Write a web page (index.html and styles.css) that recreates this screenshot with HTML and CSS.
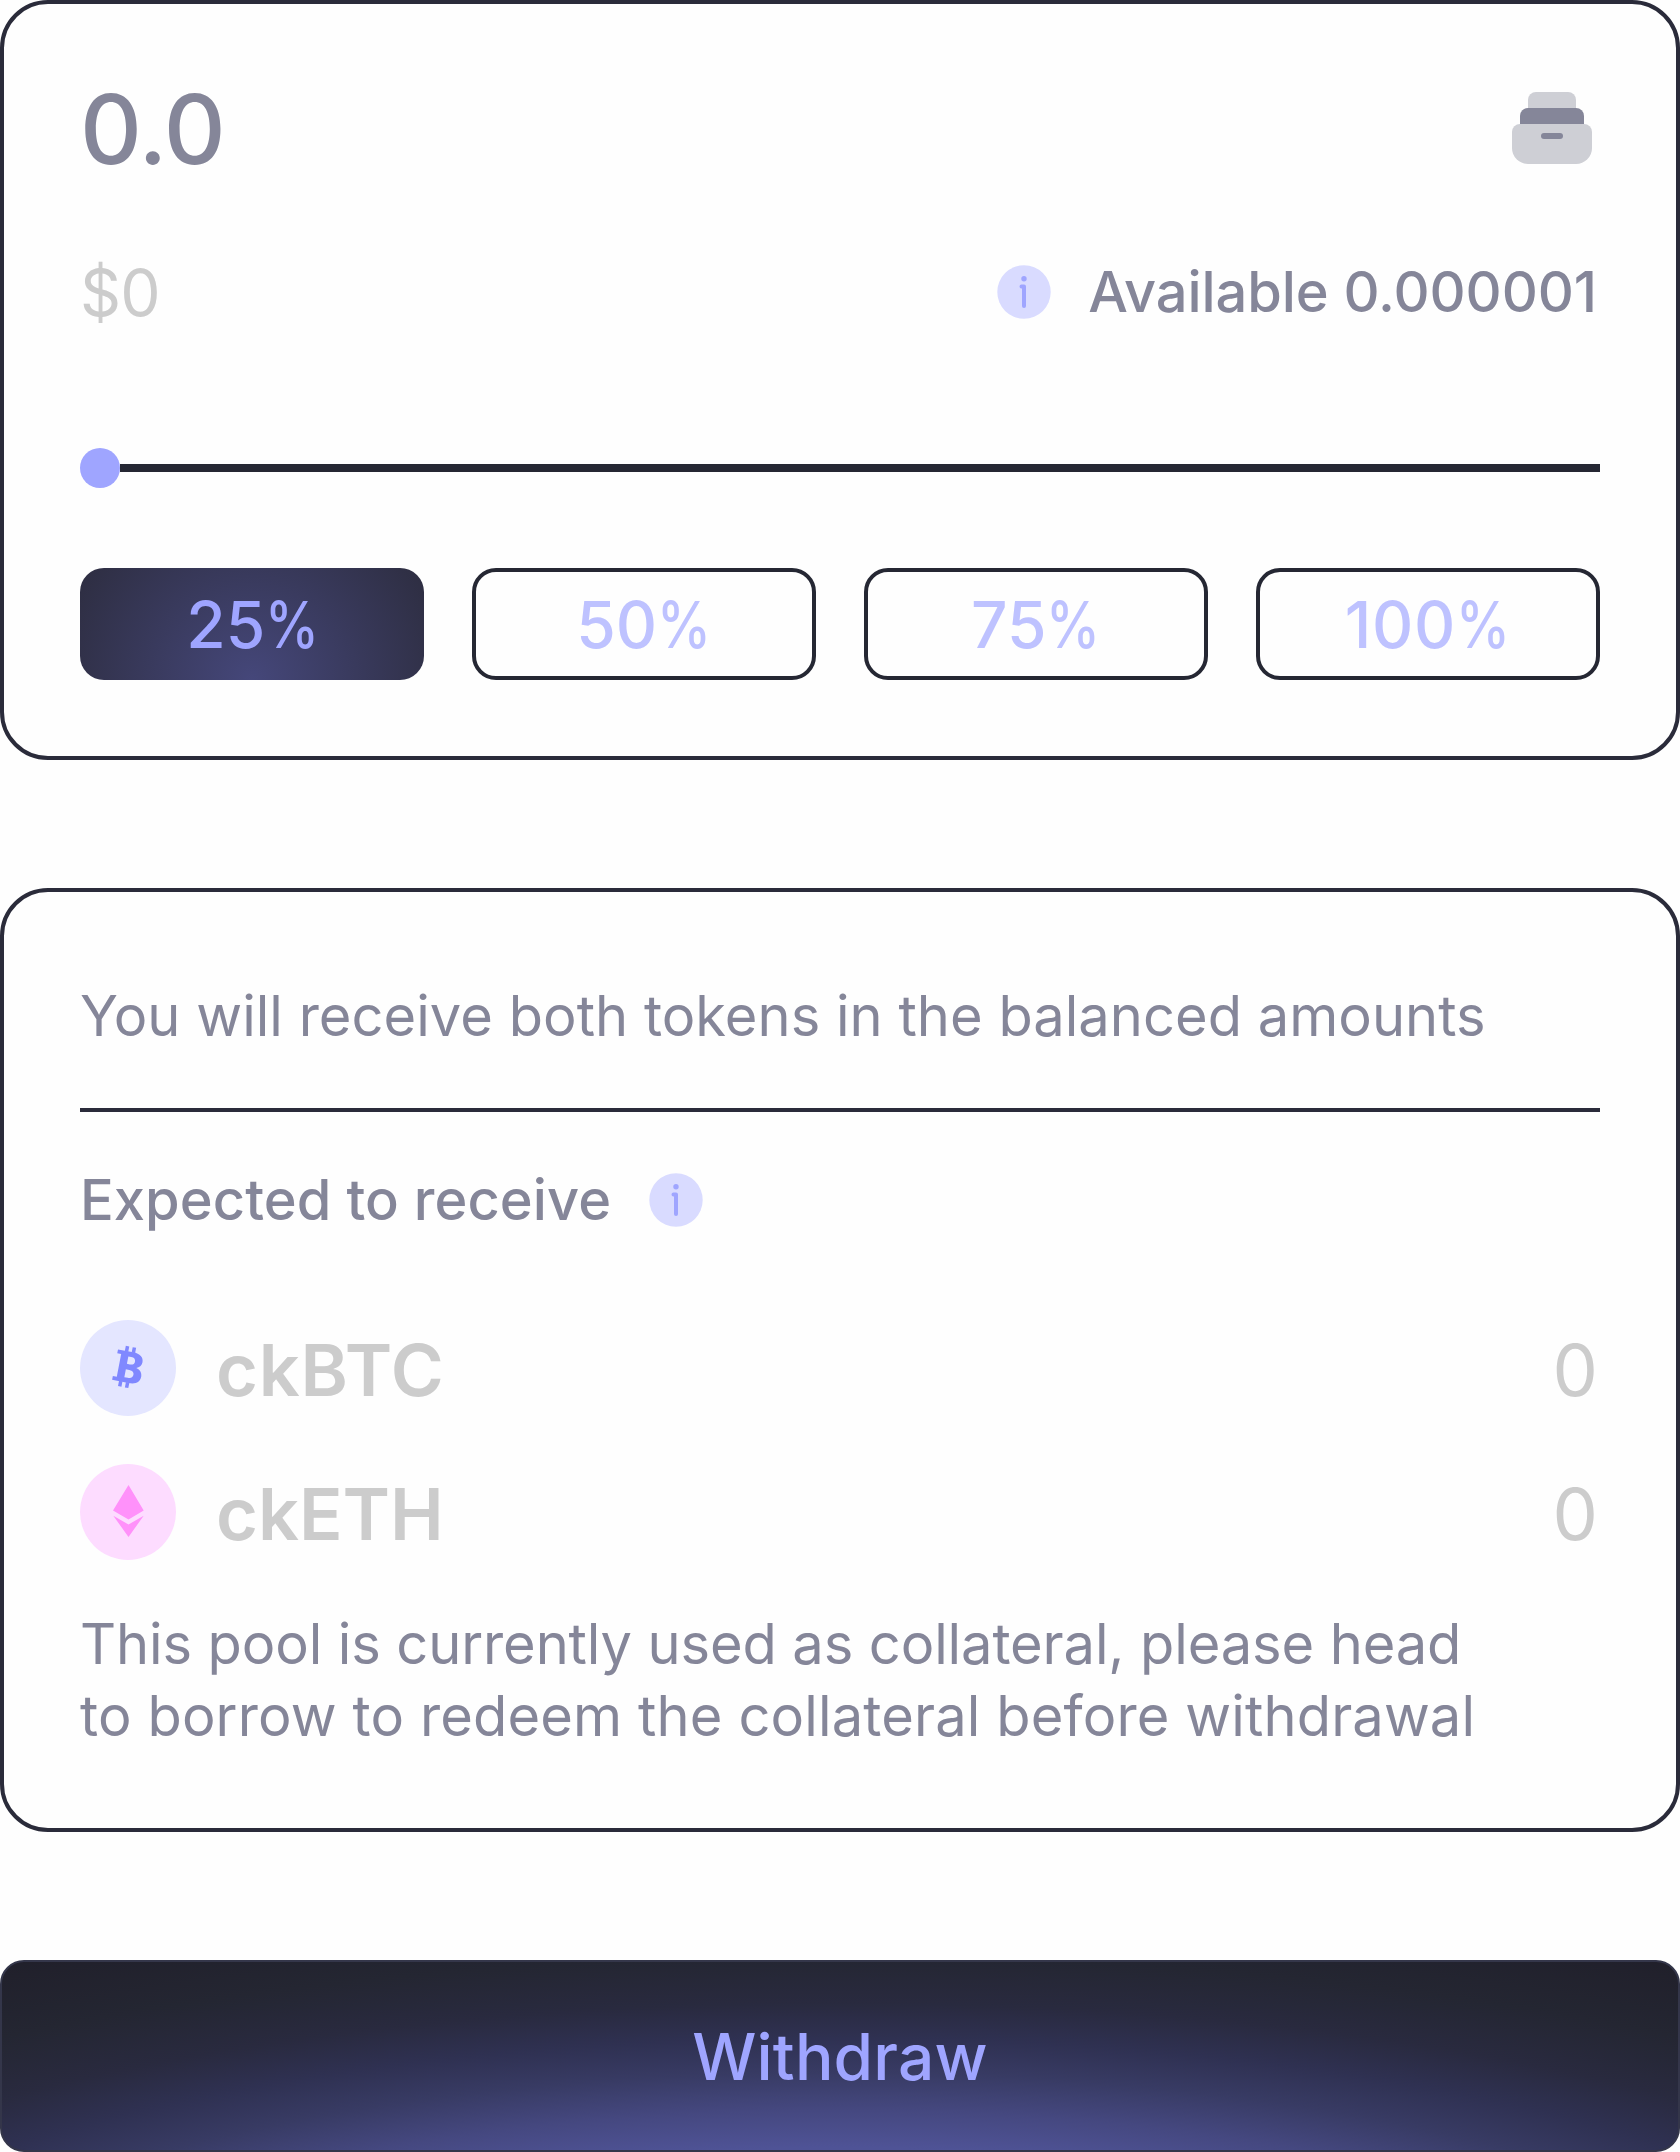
FILE: index.html
```html
<!DOCTYPE html>
<html lang="en">
<head>
<meta charset="utf-8">
<title>Withdraw</title>
<link rel="stylesheet" href="styles.css">
</head>
<body>
<main class="panel">
  <section class="card amount-card">
    <div class="amount-row">
      <span class="amount">0.0</span>
      <svg class="wallet" viewBox="0 0 96 96">
        <path fill="#cecfd5" d="M24 28V20A8 8 0 0 1 32 12H64A8 8 0 0 1 72 20V28Z"/>
        <path fill="#858699" d="M16 44V36A8 8 0 0 1 24 28H72A8 8 0 0 1 80 36V44Z"/>
        <path fill="#cecfd5" d="M16 44H80A8 8 0 0 1 88 52V68A16 16 0 0 1 72 84H24A16 16 0 0 1 8 68V52A8 8 0 0 1 16 44Z"/>
        <rect fill="#858699" x="37" y="53" width="22" height="6" rx="3"/>
      </svg>
    </div>
    <div class="available-row">
      <span class="fiat">$0</span>
      <span class="available">
        <svg class="info" viewBox="0 0 54 54">
          <circle cx="27" cy="27" r="26.7" fill="#d9dbff"/>
          <circle cx="27" cy="13.700" r="2.700" fill="#9fa5ff"/>
          <path d="M24.500 21.500H27V41" fill="none" stroke="#9fa5ff" stroke-width="4" stroke-linecap="round" stroke-linejoin="round"/>
        </svg>
        <span class="label">Available 0.000001</span>
      </span>
    </div>
    <div class="slider"><span class="thumb"></span><span class="track"></span></div>
    <div class="presets">
      <button class="preset active">25<span class="percent">%</span></button>
      <button class="preset">50<span class="percent">%</span></button>
      <button class="preset">75<span class="percent">%</span></button>
      <button class="preset full">100<span class="percent">%</span></button>
    </div>
  </section>

  <section class="card receive-card">
    <p class="note intro">You will receive both tokens in the balanced amounts</p>
    <hr class="divider">
    <div class="expected">
      <span class="label">Expected to receive</span>
      <svg class="info" viewBox="0 0 54 54">
        <circle cx="27" cy="27" r="26.7" fill="#d9dbff"/>
        <circle cx="27" cy="13.700" r="2.700" fill="#9fa5ff"/>
        <path d="M24.500 21.500H27V41" fill="none" stroke="#9fa5ff" stroke-width="4" stroke-linecap="round" stroke-linejoin="round"/>
      </svg>
    </div>
    <div class="tokens">
      <div class="token">
        <svg class="coin" viewBox="0 0 96 96">
          <circle cx="48" cy="48" r="48" fill="#e4e6ff"/>
          <g transform="translate(48.300 47.200) rotate(11)" fill="#8088ff">
            <path fill-rule="evenodd" d="M-13.500 -15.500H2C9 -15.500 13 -12.500 13 -7.500C13 -4 11 -1.700 8 -.8C12 0 14.500 3 14.500 7C14.500 12.500 10.500 15.500 3 15.500H-13.500V11.500H-9.500V-11.500H-13.500ZM-2 -10.500V-3H1C4 -3 5.500 -4.500 5.500 -6.700C5.500 -9.200 4 -10.500 1 -10.500ZM-2 2.500V10.500H1.500C5 10.500 6.500 9 6.500 6.500C6.500 4 5 2.500 1.500 2.500Z"/>
            <path d="M-6.500 -20.500H-3V-15H-6.500ZM.5 -20.500H4V-15H.5ZM-6.500 15H-3V20.500H-6.500ZM.5 15H4V20.500H.5Z"/>
          </g>
        </svg>
        <span class="symbol btc">ckBTC</span>
        <span class="value">0</span>
      </div>
      <div class="token">
        <svg class="coin" viewBox="0 0 96 96">
          <circle cx="48" cy="48" r="48" fill="#fddcff"/>
          <path fill="#ff91fa" d="M48.500 21L63.700 46.500L48.500 55.500L33 46.500ZM33.300 51.700L48.500 60.500L63.700 51.700L48.500 73Z"/>
        </svg>
        <span class="symbol">ckETH</span>
        <span class="value">0</span>
      </div>
    </div>
    <p class="note"><span class="tight">This pool is currently used as collateral, please head</span><br><span class="loose">to borrow to redeem the collateral before withdrawal</span></p>
  </section>

  <button class="withdraw">Withdraw</button>
</main>
</body>
</html>
```
FILE: styles.css
```css
* { box-sizing: border-box; }
body {
  margin: 0;
  background: #fefefe;
  font-family: Inter, "Liberation Sans", sans-serif;
  color: #858699;
}
p, hr { margin: 0; }
button { font: inherit; padding: 0; margin: 0; }
svg { display: block; flex: none; }

.panel {
  width: 1680px;
  display: flex;
  flex-direction: column;
  gap: 128px;
}
.card {
  border: 4px solid #2a2b3a;
  border-radius: 48px;
  padding: 76px;
}
.amount-card { height: 760px; }
.receive-card { height: 944px; padding-top: 88px; }

.amount-row, .available-row {
  display: flex;
  align-items: center;
  justify-content: space-between;
}
.amount-row { height: 96px; }
.amount {
  font-size: 96px;
  line-height: 96px;
  font-weight: 500;
  letter-spacing: -1.1px;
  padding-top: 2px;
}
.wallet { width: 96px; height: 96px; }
.available-row { height: 72px; margin-top: 80px; }
.fiat { font-size: 64px; line-height: 72px; color: #ccc; letter-spacing: -.8px; padding-top: 2px; }
.available { display: flex; align-items: center; gap: 37px; padding-right: 3px; }
.label { font-size: 56px; line-height: 72px; font-weight: 500; }
.available .label { letter-spacing: -.08px; }
.info { width: 54px; height: 54px; }

.slider { display: flex; align-items: center; height: 40px; margin-top: 120px; }
.thumb { width: 40px; height: 40px; border-radius: 50%; background: #9fa5ff; }
.track { flex: 1; height: 8px; background: #252733; }

.presets {
  display: grid;
  grid-template-columns: repeat(4, 1fr);
  gap: 48px;
  margin-top: 80px;
}
.preset {
  height: 112px;
  border: 4px solid #252733;
  border-radius: 24px;
  padding-top: 2px;
  background: none;
  color: #bec2ff;
  font-size: 64px;
  line-height: 102px;
  font-weight: 500;
}
.preset.full { letter-spacing: .7px; }
.preset.active {
  border: 0;
  padding-left: 2px;
  color: #9fa5ff;
  background: radial-gradient(200px 200px at 50% 100%, #45477a, #2e2e42);
}
.percent {
  display: inline-block;
  transform: scaleX(.85);
  transform-origin: left;
  margin-right: -9px;
}

.note { font-size: 56px; line-height: 72px; }
.intro { letter-spacing: .03px; }
.tight { letter-spacing: -.11px; }
.loose { letter-spacing: .13px; }
.divider { border: 0; height: 4px; background: #2a2b3a; margin: 56px 0 52px; }
.expected { display: flex; align-items: center; gap: 38px; letter-spacing: .07px; }
.tokens { display: grid; gap: 48px; margin: 84px 0 48px; }
.token {
  display: flex;
  align-items: center;
  height: 96px;
  font-size: 72px;
  line-height: 96px;
  color: #ccc;
}
.coin { width: 96px; height: 96px; }
.symbol { font-weight: 600; margin-left: 40px; padding-top: 3px; }
.symbol.btc { letter-spacing: .8px; }
.value { margin-left: auto; padding: 3px 2px 0 0; }

.withdraw {
  height: 192px;
  border: 2px solid #34364a;
  border-radius: 24px;
  color: #9fa5ff;
  font-size: 64px;
  font-weight: 500;
  letter-spacing: .2px;
  background: radial-gradient(1640px 466px at 50% 386px, #4f5396 43%, #454880 51%, #383b64 59%, #2f3152 66.400%, #292a3f 74%, #242632 84%, #201f2a 98%);
}
```
